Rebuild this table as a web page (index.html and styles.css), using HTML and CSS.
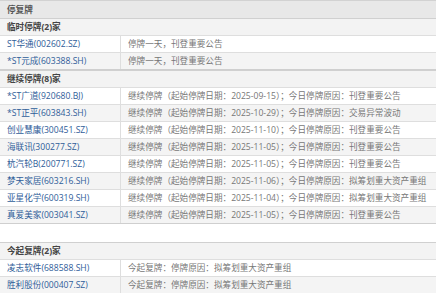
FILE: index.html
```html
<!DOCTYPE html>
<html lang="zh-CN">
<head>
<meta charset="utf-8">
<link rel="stylesheet" href="styles.css">
</head>
<body>
<div class="page">
  <div class="title">停复牌</div>

  <div class="block">
    <div class="sec">临时停牌(2)家</div>
    <div class="row"><div class="c1"><a>ST华通(002602.SZ)</a></div><div class="c2">停牌一天，刊登重要公告</div></div>
    <div class="row alt"><div class="c1"><a>*ST元成(603388.SH)</a></div><div class="c2">停牌一天，刊登重要公告</div></div>
  </div>

  <div class="block">
    <div class="sec">继续停牌(8)家</div>
    <div class="row"><div class="c1"><a>*ST广道(920680.BJ)</a></div><div class="c2">继续停牌（起始停牌日期：2025-09-15）；今日停牌原因：刊登重要公告</div></div>
    <div class="row alt"><div class="c1"><a>*ST正平(603843.SH)</a></div><div class="c2">继续停牌（起始停牌日期：2025-10-29）；今日停牌原因：交易异常波动</div></div>
    <div class="row"><div class="c1"><a>创业慧康(300451.SZ)</a></div><div class="c2">继续停牌（起始停牌日期：2025-11-10）；今日停牌原因：刊登重要公告</div></div>
    <div class="row alt"><div class="c1"><a>海联讯(300277.SZ)</a></div><div class="c2">继续停牌（起始停牌日期：2025-11-05）；今日停牌原因：刊登重要公告</div></div>
    <div class="row"><div class="c1"><a>杭汽轮B(200771.SZ)</a></div><div class="c2">继续停牌（起始停牌日期：2025-11-05）；今日停牌原因：刊登重要公告</div></div>
    <div class="row alt"><div class="c1"><a>梦天家居(603216.SH)</a></div><div class="c2">继续停牌（起始停牌日期：2025-11-06）；今日停牌原因：拟筹划重大资产重组</div></div>
    <div class="row"><div class="c1"><a>亚星化学(600319.SH)</a></div><div class="c2">继续停牌（起始停牌日期：2025-11-04）；今日停牌原因：拟筹划重大资产重组</div></div>
    <div class="row alt"><div class="c1"><a>真爱美家(003041.SZ)</a></div><div class="c2">继续停牌（起始停牌日期：2025-11-05）；今日停牌原因：刊登重要公告</div></div>
  </div>

  <div class="block gap">
    <div class="sec">今起复牌(2)家</div>
    <div class="row"><div class="c1"><a>凌志软件(688588.SH)</a></div><div class="c2">今起复牌：停牌原因：拟筹划重大资产重组</div></div>
    <div class="row alt"><div class="c1"><a>胜利股份(000407.SZ)</a></div><div class="c2">今起复牌：停牌原因：拟筹划重大资产重组</div></div>
  </div>
</div>
</body>
</html>
```

FILE: styles.css
```css
html, body {
  margin: 0;
  padding: 0;
  background: #ffffff;
}
.page {
  width: 436px;
  font-family: "Open Sans", "Noto Sans CJK SC", sans-serif;
  font-size: 8.6px;
  color: #666;
  overflow: hidden;
}
.title {
  height: 17px;
  line-height: 18px;
  border-top: 1px solid #d2d2d2;
  background: #e8e8e8;
  padding-left: 7px;
  font-weight: bold;
  color: #555;
}
.block {
  border-top: 1px solid #d0d0d0;
  border-bottom: 1px solid #cfcfcf;
}
.block.gap {
  margin-top: 18px;
}
.sec {
  height: 16px;
  line-height: 17px;
  background: #f3f3f3;
  padding-left: 7px;
  font-weight: bold;
  color: #444;
}
.row {
  display: flex;
  height: 16px;
  line-height: 17px;
  border-top: 1px solid #dedede;
  background: #ffffff;
}
.row.alt {
  background: #f4f4f4;
}
.c1 {
  width: 121px;
  flex: none;
  box-sizing: border-box;
  padding-left: 7px;
  border-right: 1px solid #dedede;
  white-space: nowrap;
}
.c1 a {
  color: #2f5d99;
}
.c2 {
  padding-left: 7px;
  white-space: nowrap;
  color: #777;
}
```
